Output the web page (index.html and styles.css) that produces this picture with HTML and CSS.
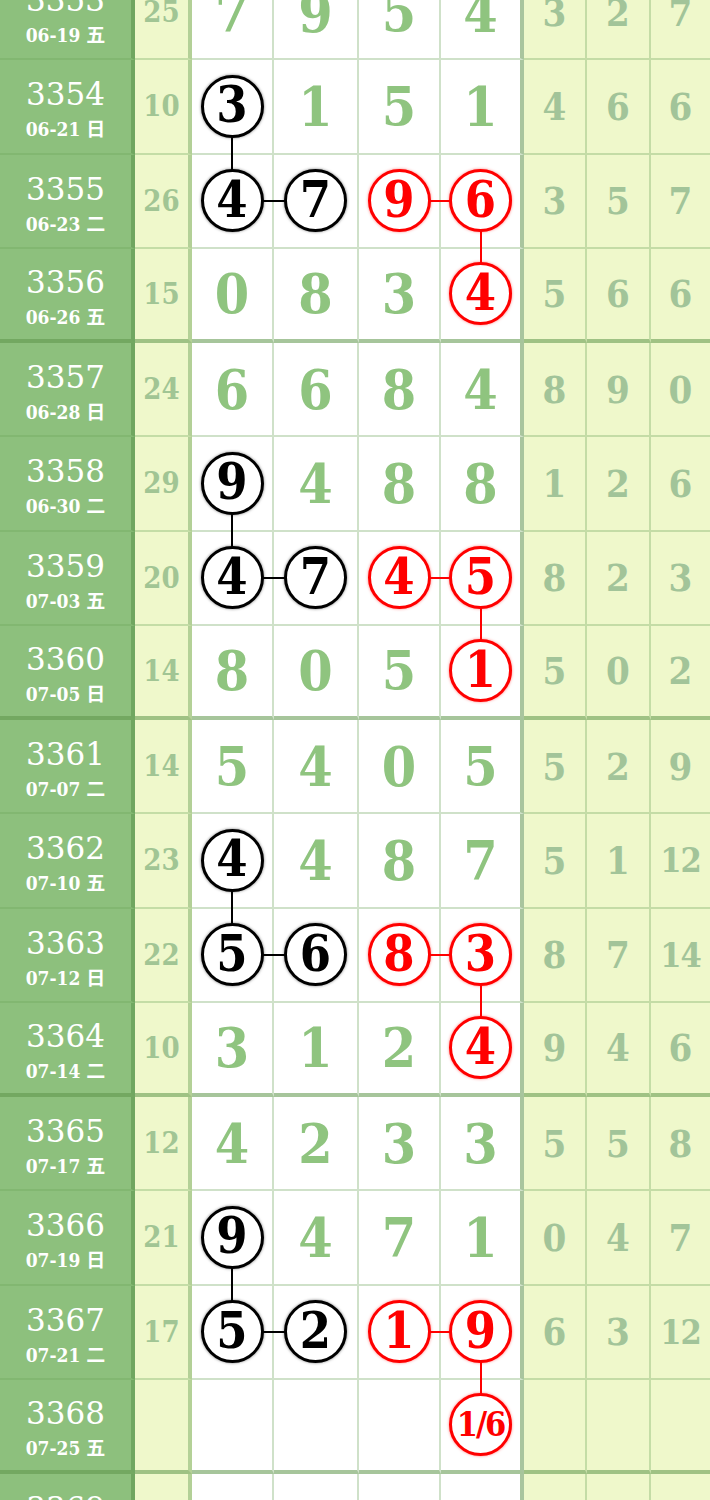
FILE: index.html
```html
<!DOCTYPE html>
<html lang="zh-CN">
<head>
  <meta charset="UTF-8" />
  <meta name="viewport" content="width=device-width, initial-scale=1" />
  <title>走势图</title>
  <link rel="stylesheet" href="styles.css">
</head>
<body>
  <div class="chart">

    <div class="row">
      <div class="cell issue"><span class="no">3353</span><span class="date">06-19 五</span></div>
      <div class="cell sum">25</div>
      <div class="cell main">7</div><div class="cell main">9</div><div class="cell main">5</div><div class="cell main end">4</div>
      <div class="cell side">3</div><div class="cell side">2</div><div class="cell side last">7</div>
    </div>
    <div class="row">
      <div class="cell issue"><span class="no">3354</span><span class="date">06-21 日</span></div>
      <div class="cell sum">10</div>
      <div class="cell main down"><span class="ball">3</span></div><div class="cell main">1</div><div class="cell main">5</div><div class="cell main end">1</div>
      <div class="cell side">4</div><div class="cell side">6</div><div class="cell side last">6</div>
    </div>
    <div class="row">
      <div class="cell issue"><span class="no">3355</span><span class="date">06-23 二</span></div>
      <div class="cell sum">26</div>
      <div class="cell main right"><span class="ball">4</span></div><div class="cell main"><span class="ball">7</span></div><div class="cell main right red"><span class="ball red">9</span></div><div class="cell main end down red"><span class="ball red">6</span></div>
      <div class="cell side">3</div><div class="cell side">5</div><div class="cell side last">7</div>
    </div>
    <div class="row group-end">
      <div class="cell issue"><span class="no">3356</span><span class="date">06-26 五</span></div>
      <div class="cell sum">15</div>
      <div class="cell main">0</div><div class="cell main">8</div><div class="cell main">3</div><div class="cell main end"><span class="ball red">4</span></div>
      <div class="cell side">5</div><div class="cell side">6</div><div class="cell side last">6</div>
    </div>

    <div class="row">
      <div class="cell issue"><span class="no">3357</span><span class="date">06-28 日</span></div>
      <div class="cell sum">24</div>
      <div class="cell main">6</div><div class="cell main">6</div><div class="cell main">8</div><div class="cell main end">4</div>
      <div class="cell side">8</div><div class="cell side">9</div><div class="cell side last">0</div>
    </div>
    <div class="row">
      <div class="cell issue"><span class="no">3358</span><span class="date">06-30 二</span></div>
      <div class="cell sum">29</div>
      <div class="cell main down"><span class="ball">9</span></div><div class="cell main">4</div><div class="cell main">8</div><div class="cell main end">8</div>
      <div class="cell side">1</div><div class="cell side">2</div><div class="cell side last">6</div>
    </div>
    <div class="row">
      <div class="cell issue"><span class="no">3359</span><span class="date">07-03 五</span></div>
      <div class="cell sum">20</div>
      <div class="cell main right"><span class="ball">4</span></div><div class="cell main"><span class="ball">7</span></div><div class="cell main right red"><span class="ball red">4</span></div><div class="cell main end down red"><span class="ball red">5</span></div>
      <div class="cell side">8</div><div class="cell side">2</div><div class="cell side last">3</div>
    </div>
    <div class="row group-end">
      <div class="cell issue"><span class="no">3360</span><span class="date">07-05 日</span></div>
      <div class="cell sum">14</div>
      <div class="cell main">8</div><div class="cell main">0</div><div class="cell main">5</div><div class="cell main end"><span class="ball red">1</span></div>
      <div class="cell side">5</div><div class="cell side">0</div><div class="cell side last">2</div>
    </div>

    <div class="row">
      <div class="cell issue"><span class="no">3361</span><span class="date">07-07 二</span></div>
      <div class="cell sum">14</div>
      <div class="cell main">5</div><div class="cell main">4</div><div class="cell main">0</div><div class="cell main end">5</div>
      <div class="cell side">5</div><div class="cell side">2</div><div class="cell side last">9</div>
    </div>
    <div class="row">
      <div class="cell issue"><span class="no">3362</span><span class="date">07-10 五</span></div>
      <div class="cell sum">23</div>
      <div class="cell main down"><span class="ball">4</span></div><div class="cell main">4</div><div class="cell main">8</div><div class="cell main end">7</div>
      <div class="cell side">5</div><div class="cell side">1</div><div class="cell side last two">12</div>
    </div>
    <div class="row">
      <div class="cell issue"><span class="no">3363</span><span class="date">07-12 日</span></div>
      <div class="cell sum">22</div>
      <div class="cell main right"><span class="ball">5</span></div><div class="cell main"><span class="ball">6</span></div><div class="cell main right red"><span class="ball red">8</span></div><div class="cell main end down red"><span class="ball red">3</span></div>
      <div class="cell side">8</div><div class="cell side">7</div><div class="cell side last two">14</div>
    </div>
    <div class="row group-end">
      <div class="cell issue"><span class="no">3364</span><span class="date">07-14 二</span></div>
      <div class="cell sum">10</div>
      <div class="cell main">3</div><div class="cell main">1</div><div class="cell main">2</div><div class="cell main end"><span class="ball red">4</span></div>
      <div class="cell side">9</div><div class="cell side">4</div><div class="cell side last">6</div>
    </div>

    <div class="row">
      <div class="cell issue"><span class="no">3365</span><span class="date">07-17 五</span></div>
      <div class="cell sum">12</div>
      <div class="cell main">4</div><div class="cell main">2</div><div class="cell main">3</div><div class="cell main end">3</div>
      <div class="cell side">5</div><div class="cell side">5</div><div class="cell side last">8</div>
    </div>
    <div class="row">
      <div class="cell issue"><span class="no">3366</span><span class="date">07-19 日</span></div>
      <div class="cell sum">21</div>
      <div class="cell main down"><span class="ball">9</span></div><div class="cell main">4</div><div class="cell main">7</div><div class="cell main end">1</div>
      <div class="cell side">0</div><div class="cell side">4</div><div class="cell side last">7</div>
    </div>
    <div class="row">
      <div class="cell issue"><span class="no">3367</span><span class="date">07-21 二</span></div>
      <div class="cell sum">17</div>
      <div class="cell main right"><span class="ball">5</span></div><div class="cell main"><span class="ball">2</span></div><div class="cell main right red"><span class="ball red">1</span></div><div class="cell main end down red"><span class="ball red">9</span></div>
      <div class="cell side">6</div><div class="cell side">3</div><div class="cell side last two">12</div>
    </div>
    <div class="row group-end">
      <div class="cell issue"><span class="no">3368</span><span class="date">07-25 五</span></div>
      <div class="cell sum"></div>
      <div class="cell main"></div><div class="cell main"></div><div class="cell main"></div><div class="cell main end"><span class="ball red small">1/6</span></div>
      <div class="cell side"></div><div class="cell side"></div><div class="cell side last"></div>
    </div>

    <div class="row">
      <div class="cell issue"><span class="no">3369</span><span class="date">07-28 日</span></div>
      <div class="cell sum"></div>
      <div class="cell main"></div><div class="cell main"></div><div class="cell main"></div><div class="cell main end"></div>
      <div class="cell side"></div><div class="cell side"></div><div class="cell side last"></div>
    </div>

  </div>
</body>
</html>
```

FILE: styles.css
```css
body {
  margin: 0;
  background: #fff;
  font-family: 'DejaVu Serif', 'Noto Sans CJK SC', serif;
  overflow: hidden;
}
.chart {
  width: 710px;
  margin-top: -34px;
}
.row {
  display: grid;
  grid-template-columns: 135px 57px 82px 85px 82px 83px 63px 64px 59px;
  height: 94.25px;
}
.cell {
  position: relative;
  display: flex;
  align-items: center;
  justify-content: center;
  box-sizing: border-box;
  border-right: 2px solid rgba(110, 165, 90, 0.33);
  border-bottom: 2px solid rgba(110, 165, 90, 0.33);
  font-weight: 700;
}
.group-end .cell {
  border-bottom: 4px solid rgba(95, 150, 75, 0.55);
}
.issue {
  flex-direction: column;
  background: #8dc07d;
  color: #fff;
  border-right: 4px solid rgba(60, 120, 45, 0.35);
  font-weight: 400;
  padding-top: 5px;
}
.issue .no {
  font-size: 31px;
  line-height: 34px;
}
.issue .date {
  margin-top: 7px;
  font-size: 19px;
  line-height: 22px;
  font-weight: 700;
  font-stretch: condensed;
}
.sum {
  background: #eff8cb;
  color: #a1c594;
  font-size: 29px;
  font-stretch: condensed;
  border-right: 4px solid rgba(120, 170, 100, 0.5);
}
.main {
  background: #fff;
  color: #8fc47f;
  font-size: 55px;
  font-stretch: condensed;
}
.main.end {
  border-right: 4px solid rgba(100, 150, 80, 0.55);
}
.side {
  background: #eff8cb;
  color: #a2c499;
  font-size: 38px;
  font-stretch: condensed;
}
.side.two {
  font-size: 34px;
  letter-spacing: -1px;
}
.side.last {
  border-right: none;
}
.ball {
  position: relative;
  z-index: 2;
  width: 63px;
  height: 63px;
  box-sizing: border-box;
  border: 3px solid #000;
  border-radius: 50%;
  background: #fff;
  color: #000;
  box-shadow: 0 0 3px rgba(0, 0, 0, 0.55);
  display: flex;
  align-items: center;
  justify-content: center;
  font-size: 50px;
  line-height: 1;
  padding-bottom: 2px;
}
.ball.red {
  border-color: #f00;
  color: #f00;
  box-shadow: 0 0 3px rgba(255, 0, 0, 0.5);
}
.ball.small {
  font-size: 34px;
  letter-spacing: -2px;
}
.down::after {
  content: '';
  position: absolute;
  z-index: 1;
  left: calc(50% - 1px);
  top: 50%;
  width: 2px;
  height: 100%;
  background: #000;
}
.right::before {
  content: '';
  position: absolute;
  z-index: 1;
  left: 50%;
  top: calc(50% - 1px);
  width: 100%;
  height: 2px;
  background: #000;
}
.down.red::after,
.right.red::before {
  background: #f00;
}
```
